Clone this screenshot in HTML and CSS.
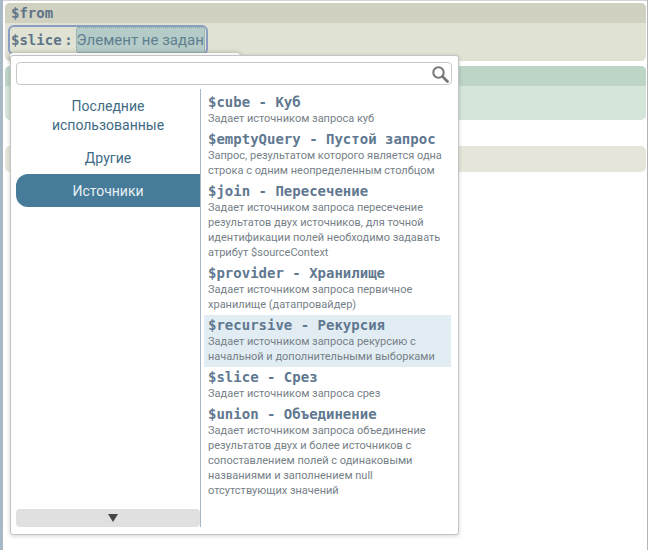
FILE: index.html
```html
<!DOCTYPE html>
<html lang="ru">
<head>
<meta charset="utf-8">
<title>Редактор запроса</title>
<link rel="stylesheet" href="styles.css">
</head>
<body>
<div class="page">
  <section class="block block-from">
    <div class="block-head">$from</div>
    <div class="block-body">
      <div class="slice-box">
        <span class="slice-key">$slice</span><span class="slice-colon">:</span>
        <span class="slice-value">Элемент не задан</span>
      </div>
    </div>
  </section>
  <section class="block block-green">
    <div class="block-head"></div>
    <div class="block-body"></div>
  </section>
  <section class="block block-plain"></section>

  <div class="popup-back"></div>
  <div class="popup">
    <div class="search">
      <svg class="search-icon" width="18" height="18" viewBox="0 0 18 18">
        <circle cx="7.5" cy="7.5" r="5.2" fill="none" stroke="#777" stroke-width="2"/>
        <path d="M11.5 11.5L16.5 16.5" stroke="#777" stroke-width="2.8" stroke-linecap="round"/>
      </svg>
    </div>
    <div class="columns">
      <nav class="side">
        <div class="side-list">
          <div class="side-item">Последние использованные</div>
          <div class="side-item">Другие</div>
          <div class="side-item side-active">Источники</div>
        </div>
        <div class="side-more"><span class="arrow-down"></span></div>
      </nav>
      <div class="items">
        <div class="item">
          <div class="item-title">$cube - Куб</div>
          <div class="item-desc">Задает источником запроса куб</div>
        </div>
        <div class="item">
          <div class="item-title">$emptyQuery - Пустой запрос</div>
          <div class="item-desc">Запрос, результатом которого является одна<br>строка с одним неопределенным столбцом</div>
        </div>
        <div class="item">
          <div class="item-title">$join - Пересечение</div>
          <div class="item-desc">Задает источником запроса пересечение<br>результатов двух источников, для точной<br>идентификации полей необходимо задавать<br>атрибут $sourceContext</div>
        </div>
        <div class="item">
          <div class="item-title">$provider - Хранилище</div>
          <div class="item-desc">Задает источником запроса первичное<br>хранилище (датапровайдер)</div>
        </div>
        <div class="item item-hover">
          <div class="item-title">$recursive - Рекурсия</div>
          <div class="item-desc">Задает источником запроса рекурсию с<br>начальной и дополнительными выборками</div>
        </div>
        <div class="item">
          <div class="item-title">$slice - Срез</div>
          <div class="item-desc">Задает источником запроса срез</div>
        </div>
        <div class="item">
          <div class="item-title">$union - Объединение</div>
          <div class="item-desc">Задает источником запроса объединение<br>результатов двух и более источников с<br>сопоставлением полей с одинаковыми<br>названиями и заполнением null<br>отсутствующих значений</div>
        </div>
      </div>
    </div>
  </div>
</div>
</body>
</html>
```
FILE: styles.css
```css
* { box-sizing: border-box; }
html, body { margin: 0; padding: 0; height: 100%; background: #fff; }
body { overflow: hidden; font-family: Roboto, sans-serif; }
.page {
  position: relative;
  width: 648px;
  height: 550px;
  padding: 3px 2px 0 5px;
  background:
    linear-gradient(#a9b8c5, #a9b8c5) left top / 3px 100% no-repeat,
    linear-gradient(#b5b5b5, #b5b5b5) right top / 1px 100% no-repeat,
    linear-gradient(#d4d4d4, #d4d4d4) left top / 100% 1px no-repeat,
    #fff;
}
.block { border-radius: 5px; overflow: hidden; }
.block-head {
  height: 20px;
  padding-left: 6px;
  font: bold 14px/20px "DejaVu Sans Mono", monospace;
  color: #5f7486;
}
.block-from { height: 58px; background: #e0e2d3; }
.block-from .block-head { background: #d0d1c1; }
.block-green { height: 54px; margin-top: 5px; background: #d5e5da; }
.block-green .block-head { background: #bdd5c6; }
.block-plain { height: 26px; margin-top: 26px; background: #e5e6d9; }
.block-body { display: flex; }
.slice-box {
  display: flex;
  align-items: center;
  width: 200px;
  height: 30px;
  margin: 2px 0 0 3px;
  padding: 0 1px 0 1px;
  border: 2px solid #8a9cc2;
  border-radius: 6px;
}
.slice-key {
  font: bold 14px/20px "DejaVu Sans Mono", monospace;
  color: #5f7486;
}
.slice-colon {
  width: 14px;
  text-align: center;
  font: bold 14px/20px "DejaVu Sans Mono", monospace;
  color: #5f7486;
}
.slice-value {
  width: 129px;
  height: 26px;
  padding-left: 0;
  border: 1px dotted #7fa3a0;
  border-radius: 3px;
  background: #b5cbc8;
  font-size: 15px;
  line-height: 25px;
  white-space: nowrap;
  color: #5f7f8f;
}
.popup-back {
  position: absolute;
  left: 10px;
  top: 53px;
  width: 230px;
  height: 10px;
  background: #fff;
  border-radius: 3px;
  box-shadow: 0 0 5px rgba(0,0,0,.25);
}
.popup {
  position: absolute;
  left: 10px;
  top: 55px;
  width: 449px;
  height: 480px;
  padding: 6px 6px 6px 5px;
  background: #fff;
  border: 1px solid #c4c4c4;
  border-radius: 3px;
  box-shadow: 0 1px 4px rgba(0,0,0,.18);
}
.search {
  display: flex;
  justify-content: flex-end;
  align-items: center;
  height: 23px;
  padding-right: 2px;
  border: 1px solid #c8c8c8;
  border-radius: 4px;
}
.columns { display: flex; height: 438px; margin-top: 4px; }
.side {
  display: flex;
  flex-direction: column;
  justify-content: space-between;
  width: 185px;
  border-right: 1px solid #a9b8c9;
}
.side-list { display: flex; flex-direction: column; padding-top: 5px; }
.side-item {
  padding: 3px 24px 7px;
  font-size: 14px;
  line-height: 19px;
  text-align: center;
  color: #3f6b85;
}
.side-item + .side-item { margin-top: 4px; }
.side-item + .side-active {
  height: 33px;
  margin-top: -1px;
  padding: 8px 0 6px;
  border-radius: 12px 0 0 12px;
  background: #467b99;
  color: #e8f0f4;
}
.side-more {
  display: flex;
  justify-content: center;
  align-items: center;
  height: 18px;
  padding-left: 10px;
  border-radius: 4px;
  background: #e0e0e0;
}
.arrow-down {
  width: 0;
  height: 0;
  border-left: 5px solid transparent;
  border-right: 5px solid transparent;
  border-top: 8px solid #444;
}
.items { flex: 1; padding: 3px 1px 0 3px; }
.item { padding: 1px 4px 3px; }
.item-title {
  height: 18px;
  font: bold 14px/19px "DejaVu Sans Mono", monospace;
  color: #5f7890;
  white-space: nowrap;
}
.item-desc {
  font-size: 11px;
  line-height: 15px;
  color: #767f88;
  white-space: nowrap;
}
.item-hover { background: #e2edf3; }
```
